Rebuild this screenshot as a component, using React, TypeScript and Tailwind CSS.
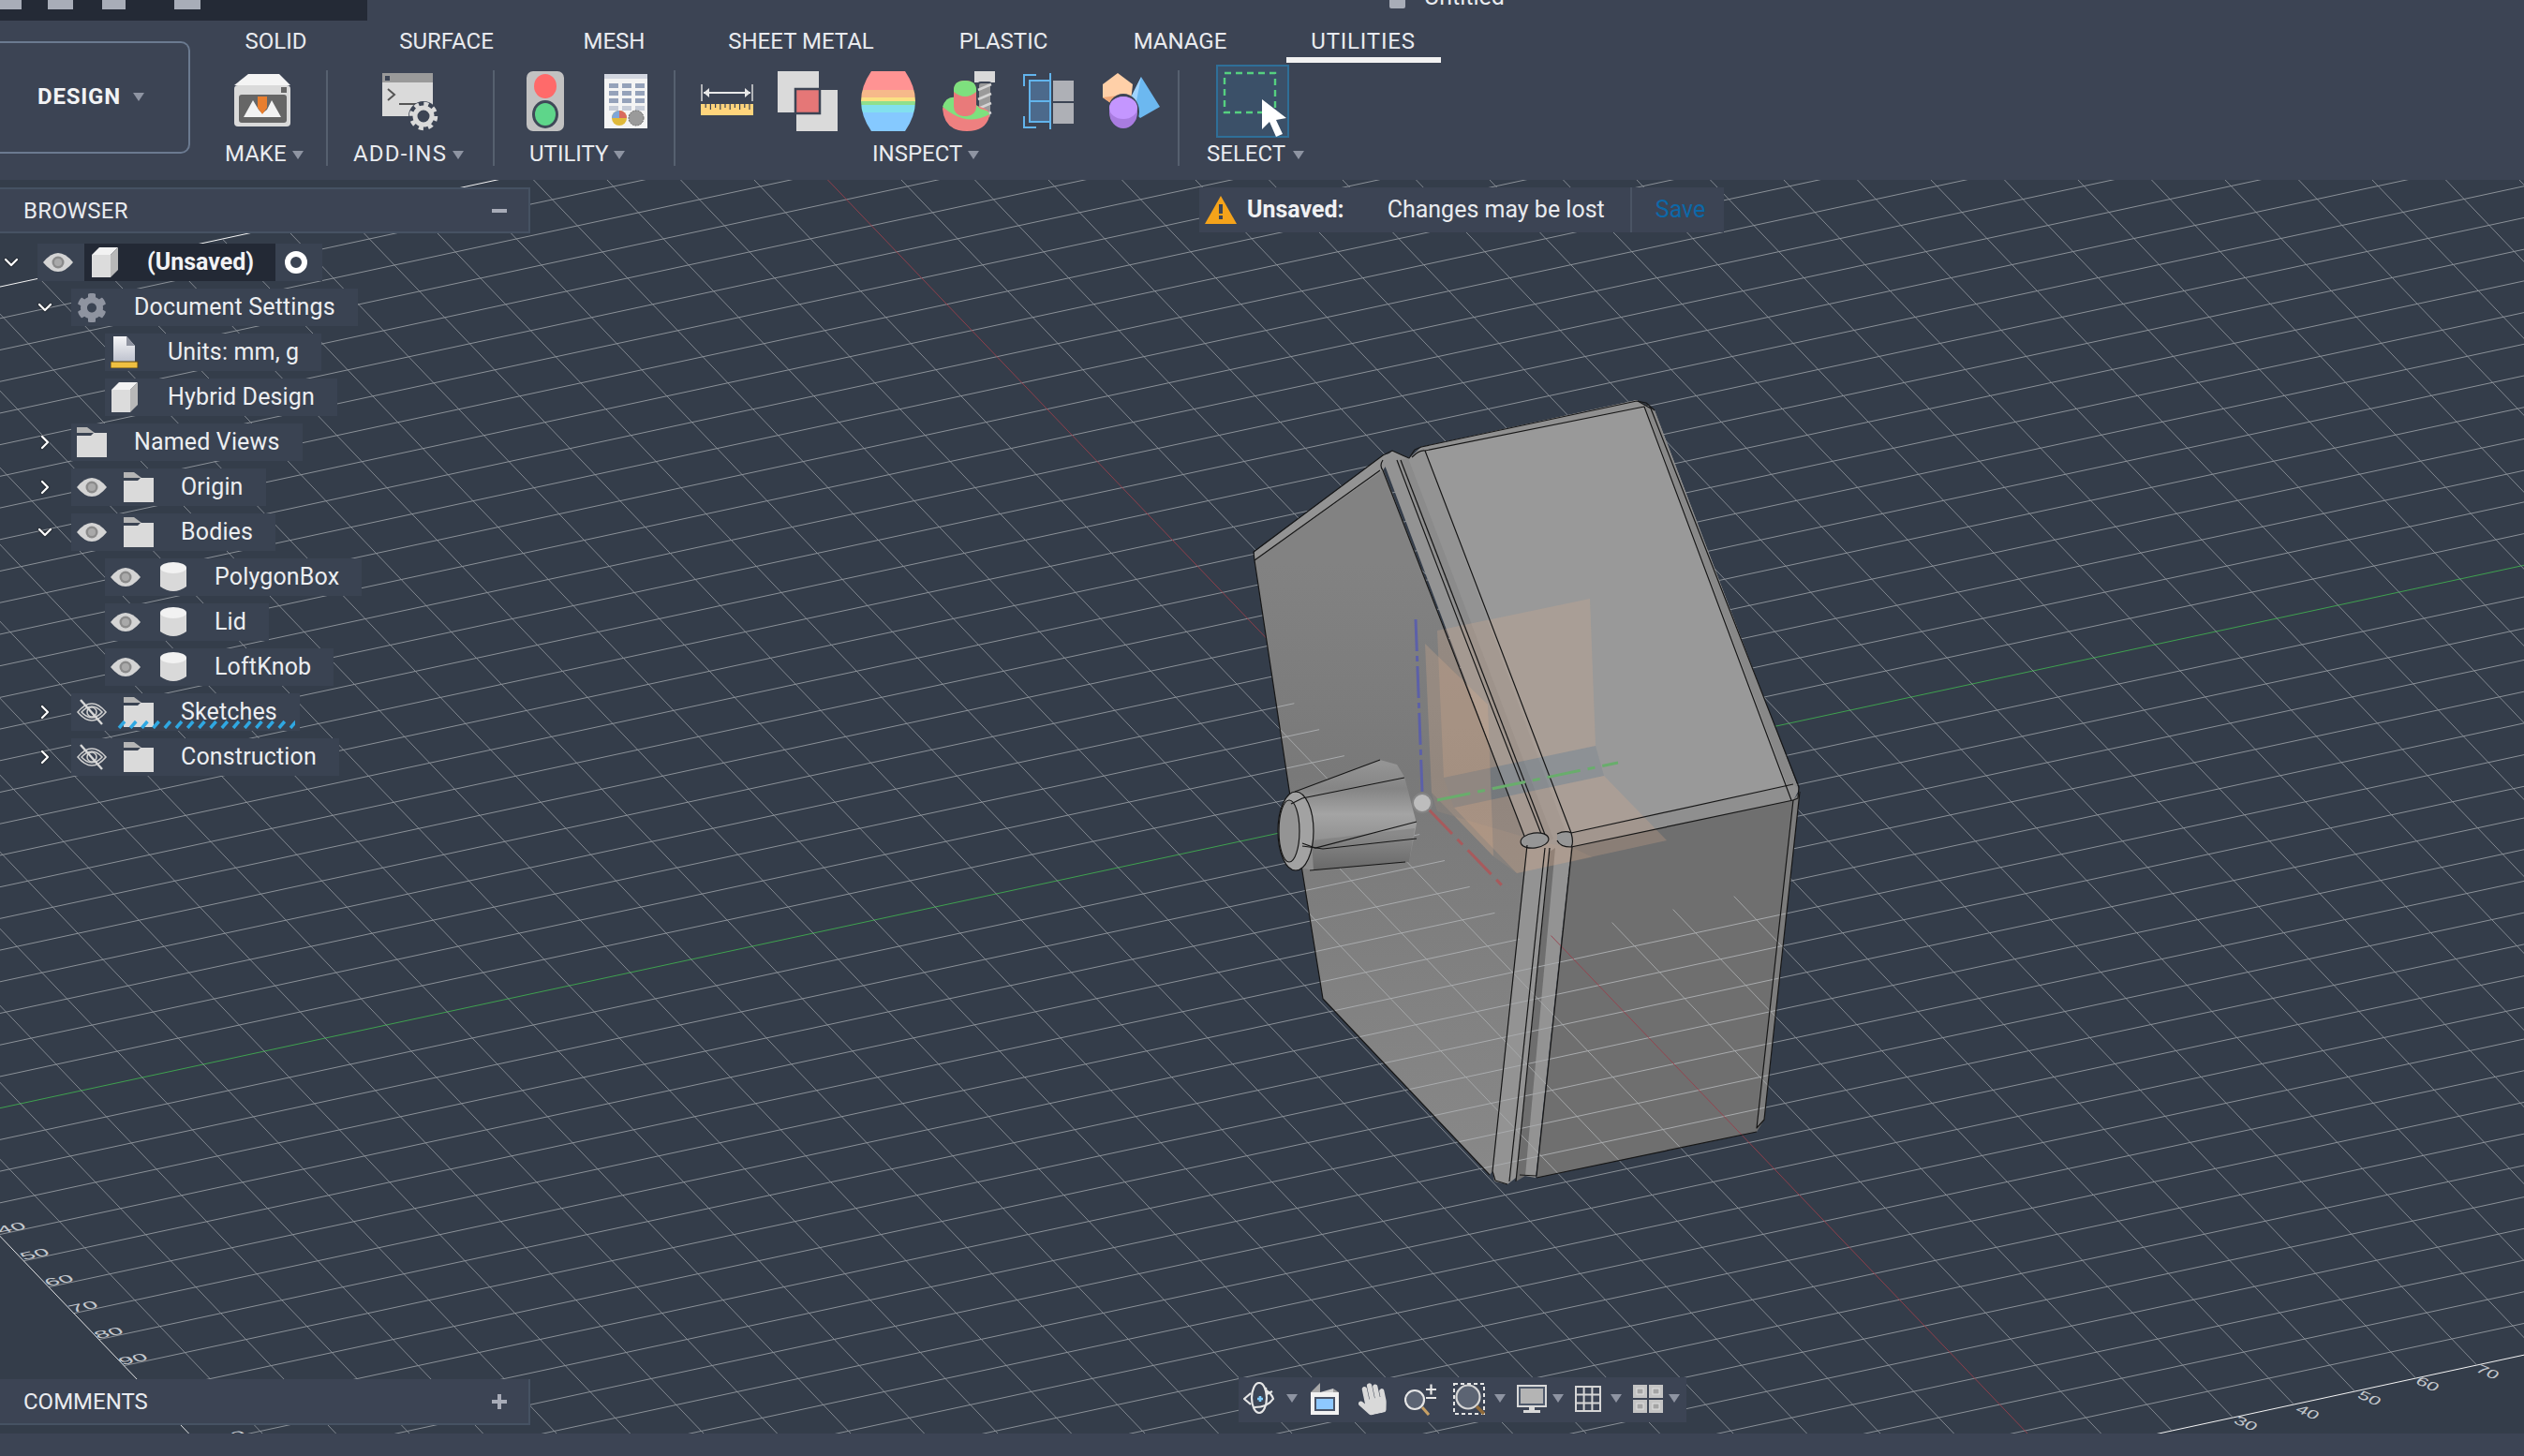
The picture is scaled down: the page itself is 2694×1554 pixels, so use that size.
import { ChevronDown, ChevronRight } from "lucide-react";
import { FaCog, FaHandPaper } from "react-icons/fa";
import type { ReactNode } from "react";

// ground grid is a plain affine projection, fitted from the screenshot
const O = { x: 1519, y: 856 };
const U = { x: 65.1, y: -14 };
const V = { x: 26.76, y: 27.96 };
const pt = (a: number, b: number) => ({ x: O.x + a * U.x + b * V.x, y: O.y + a * U.y + b * V.y });
const range = (from: number, to: number) => Array.from({ length: to - from + 1 }, (_, i) => from + i);

const A_MIN = -25;
const A_MAX = 25;
const B_MIN = -26;
const B_MAX = 25;

function Seg({ a0, b0, a1, b1, color, width = 1 }: { a0: number; b0: number; a1: number; b1: number; color: string; width?: number }) {
  const p = pt(a0, b0);
  const q = pt(a1, b1);
  return <line x1={p.x} y1={p.y} x2={q.x} y2={q.y} stroke={color} strokeWidth={width} />;
}

const MINOR = "#8b9198";

function lineColor(kind: "a" | "b", i: number) {
  if (kind === "a" && i === 0) return "#99404c";
  if (kind === "b" && i === 0) return "#3fa14f";
  if (kind === "a" && i === A_MIN) return "#f4f4f4";
  if (kind === "b" && (i === B_MIN || i === B_MAX)) return "#f4f4f4";
  return MINOR;
}

function GridLines() {
  return (
    <g>
      {range(B_MIN, B_MAX).map((b) => (
        <Seg key={"h" + b} a0={A_MIN} b0={b} a1={A_MAX} b1={b} color={lineColor("b", b)} />
      ))}
      {range(A_MIN, A_MAX).map((a) => (
        <Seg key={"v" + a} a0={a} b0={B_MIN} a1={a} b1={B_MAX} color={lineColor("a", a)} width={0.9} />
      ))}
    </g>
  );
}

// the part of the grid that stays visible through the lower half of the model
function GridOverBody() {
  return (
    <g clipPath="url(#bodyClip)">
      {range(-12, B_MAX).map((b) => (
        <Seg key={"h" + b} a0={A_MIN} b0={b} a1={b <= 5 ? -0.47 : A_MAX} b1={b} color={lineColor("b", b) === MINOR ? "#a9abad" : lineColor("b", b)} />
      ))}
      {range(A_MIN, A_MAX).map((a) => (
        <Seg key={"v" + a} a0={a} b0={a < 0 ? B_MIN : 5.1} a1={a} b1={B_MAX} color={lineColor("a", a) === MINOR ? "#a9abad" : lineColor("a", a)} width={0.9} />
      ))}
    </g>
  );
}

function Labels() {
  const left = [
    ["40", 15, 1310],
    ["50", 40, 1338],
    ["60", 66, 1366],
    ["70", 92, 1394],
    ["80", 119, 1422],
    ["90", 145, 1450],
    ["100", 186, 1479],
    ["120", 243, 1534],
  ] as const;
  const bottom = [
    ["30", 2392, 1520],
    ["40", 2458, 1508],
    ["50", 2524, 1493],
    ["60", 2586, 1478],
    ["70", 2650, 1465],
  ] as const;
  return (
    <g fontFamily="'Liberation Sans', sans-serif" fontSize="20" fill="#c4c8cd">
      {left.map(([t, x, y]) => (
        <text key={"l" + t} textAnchor="middle" transform={`matrix(1.3 -0.28 0.45 0.5 ${x} ${y + 4})`}>
          {t}
        </text>
      ))}
      {bottom.map(([t, x, y]) => (
        <text key={"b" + t} textAnchor="middle" transform={`matrix(1 0.42 -0.45 0.55 ${x + 2} ${y + 3})`}>
          {t}
        </text>
      ))}
    </g>
  );
}

const BODY_OUTLINE =
  "1339,589 1476,486 1486,481 1504,489 1517,477 1747,427 1766,438 1920,843 1921,850 1883,1195 1875,1208 1640,1257 1622,1254 1609,1264 1595,1261 1590,1254 1412,1066 1390,930 1376,843 1339,598";

function Model() {
  return (
    <g>
      <polygon points="1339,598 1476,500 1630,900 1593,1250 1590,1254 1412,1066 1390,930 1376,843" fill="url(#leftFace)" />
      <polygon points="1339,589 1476,486 1490,482 1476,502 1339,598" fill="#939393" />
      <polygon points="1476,491 1486,481 1504,489 1517,477 1521,481 1677,889 1677,904 1639,1257 1622,1254 1609,1264 1595,1261 1593,1250 1630,902" fill="#939393" />
      <polygon points="1493,491 1503,489 1658,895 1650,900" fill="#858585" opacity="0.6" />
      <polygon points="1654,909 1660,905 1628,1255 1618,1261" fill="#6e6e6e" />
      <polygon points="1517,477 1747,427 1766,438 1920,843 1914,854 1677,904 1521,481" fill="#999999" />
      <polygon points="1756,434 1766,438 1920,843 1912,850" fill="#888888" />
      <polygon points="1521,481 1517,477 1747,427 1756,434" fill="#909090" />
      <polygon points="1677,889 1914,837 1920,843 1914,854 1677,904" fill="#8f8f8f" />
      <polygon points="1677,904 1914,854 1921,845 1883,1195 1875,1208 1640,1257" fill="#6f6f6f" />
      <polygon points="1914,854 1921,845 1883,1195 1875,1204" fill="#7c7c7c" />

      {/* origin planes */}
      <polygon points="1541,830 1703,796 1712,828 1552,862" fill="#66788a" opacity="0.22" />
      <polygon points="1534,673 1697,639 1703,796 1541,830" fill="#e2b08e" opacity="0.22" />
      <polygon points="1521,687 1588,752 1594,914 1528,846" fill="#e2b08e" opacity="0.26" />
      <polygon points="1552,862 1712,828 1779,897 1619,932" fill="#e2b08e" opacity="0.24" />
      <polygon points="1528,846 1594,914 1619,932 1700,915 1677,904 1650,900 1534,866" fill="#e2b08e" opacity="0.1" />

      <GridOverBody />

      {/* edges */}
      <g fill="none" stroke="#161616" strokeWidth="1.2" strokeLinejoin="round">
        <polyline points="1339,598 1338,589 1476,486 1486,481 1497,486 1504,489 1510,480 1517,477 1747,428 1757,430 1766,438" />
        <polyline points="1339,598 1376,843 1390,930 1412,1066 1590,1254" />
        <polyline points="1339,598 1473,502" />
        <path d="M1476,491 Q1472,497 1476,502 Q1560,720 1630,900" />
        <path d="M1491,491 Q1570,700 1647,895" />
        <path d="M1495,491 Q1575,700 1651,896" />
        <path d="M1507,488 Q1515,480 1521,481 Q1600,690 1677,889" />
        <polyline points="1521,481 1755,434 1912,854" />
        <polyline points="1748,428 1762,436 1920,840 1919,852 1914,854" />
        <polyline points="1677,889 1914,837" />
        <polyline points="1677,904 1914,854" />
        <ellipse cx="1638" cy="897" rx="15" ry="8" transform="rotate(-8 1638 897)" fill="#969696" />
        <path d="M1662,890 Q1671,886 1677,889 Q1680,900 1677,904 Q1665,904 1662,897" fill="#969696" />
        <polyline points="1630,902 1593,1250 1596,1260 1609,1264" />
        <polyline points="1649,905 1611,1261" />
        <polyline points="1654,905 1618,1261" />
        <polyline points="1678,904 1640,1255 1622,1254" />
        <polyline points="1914,854 1875,1204 1883,1195 1921,845" />
        <polyline points="1640,1257 1875,1208" />
      </g>

      {/* axes */}
      <line x1="1511" y1="661" x2="1518" y2="845" stroke="#5c60a8" strokeWidth="3" strokeDasharray="34 5 6 5" />
      <line x1="1534" y1="854" x2="1727" y2="814" stroke="#69ad6c" strokeWidth="3" strokeDasharray="36 8 8 8" />
      <line x1="1525" y1="864" x2="1604" y2="946" stroke="#a85a5c" strokeWidth="3" strokeDasharray="36 8 8 8" />
      <circle cx="1518" cy="857" r="10" fill="#bdbdbd" stroke="#858585" strokeWidth="2" />

      {/* knob */}
      <polygon points="1382,845 1473,811 1491,816 1499,829 1512,879 1504,920 1402,929 1384,925" fill="url(#knob)" />
      <polygon points="1400,897 1510,884 1504,920 1402,929" fill="url(#knobLow)" />
      <ellipse cx="1383" cy="887" rx="19" ry="42" fill="#a2a2a2" />
      <ellipse cx="1376" cy="887" rx="11" ry="33" fill="#949494" />
      <g fill="none" stroke="#161616" strokeWidth="1.2">
        <ellipse cx="1383" cy="887" rx="19" ry="42" />
        <ellipse cx="1376" cy="887" rx="11" ry="33" />
        <polyline points="1382,845 1473,811" />
        <polyline points="1378,858 1390,852 1499,830" />
        <polyline points="1390,900 1404,905 1512,877" />
        <polyline points="1390,903 1412,906 1512,895" />
        <polyline points="1398,929 1500,920" />
      </g>
    </g>
  );
}

function Viewport() {
  return (
    <svg className="absolute left-0 top-0" width="2694" height="1338" viewBox="0 192 2694 1338">
      <defs>
        <linearGradient id="leftFace" x1="0" y1="600" x2="0" y2="1250" gradientUnits="userSpaceOnUse">
          <stop offset="0" stopColor="#828282" />
          <stop offset="0.35" stopColor="#797979" />
          <stop offset="1" stopColor="#888888" />
        </linearGradient>
        <linearGradient id="knob" x1="0" y1="815" x2="0" y2="905" gradientUnits="userSpaceOnUse">
          <stop offset="0" stopColor="#949494" />
          <stop offset="0.3" stopColor="#858585" />
          <stop offset="0.6" stopColor="#a4a4a4" />
          <stop offset="1" stopColor="#8c8c8c" />
        </linearGradient>
        <linearGradient id="knobLow" x1="0" y1="890" x2="0" y2="929" gradientUnits="userSpaceOnUse">
          <stop offset="0" stopColor="#8a8a8a" />
          <stop offset="1" stopColor="#686868" />
        </linearGradient>
        <clipPath id="bodyClip">
          <polygon points={BODY_OUTLINE} />
        </clipPath>
      </defs>
      <GridLines />
      <Labels />
      <Model />
    </svg>
  );
}

function Tri({ className = "" }: { className?: string }) {
  return (
    <svg width="12" height="9" viewBox="0 0 12 9" className={className}>
      <polygon points="0,0 12,0 6,9" fill="#8e94a2" />
    </svg>
  );
}

function Eye() {
  return (
    <svg width="32" height="22" viewBox="0 0 32 22">
      <path d="M0 11 Q16 -9 32 11 Q16 31 0 11Z" fill="#d4d4d4" />
      <circle cx="16" cy="11" r="6.5" fill="#8b8b8b" />
      <circle cx="16" cy="11" r="4" fill="#a9a9a9" />
    </svg>
  );
}

function EyeOff() {
  return (
    <svg width="32" height="28" viewBox="0 0 32 28" fill="none" stroke="#cfcfcf" strokeWidth="1.6">
      <path d="M1 14 Q16 -4 31 14 Q16 32 1 14Z" />
      <path d="M5 14 Q16 2 27 14 Q16 26 5 14Z" />
      <circle cx="16" cy="14" r="5" />
      <line x1="4" y1="1" x2="27" y2="27" strokeWidth="2.4" stroke="#d8d8d8" />
    </svg>
  );
}

function Cube() {
  return (
    <svg width="28" height="32" viewBox="0 0 28 32">
      <polygon points="0,8 8,0 28,0 20,8" fill="#f2f2f2" />
      <polygon points="0,8 20,8 20,32 0,32" fill="#dcdcdc" />
      <polygon points="20,8 28,0 28,24 20,32" fill="#b8b8b8" />
    </svg>
  );
}

function Folder() {
  return (
    <svg width="32" height="32" viewBox="0 0 32 32">
      <polygon points="0,0 11,0 19,6 0,6" fill="#b5b5b5" />
      <polygon points="0,6 0,32 32,32 32,6 18,6 14,10 0,10" fill="#dadada" />
      <rect x="0" y="9" width="32" height="23" fill="#dadada" />
    </svg>
  );
}

function Cylinder() {
  return (
    <svg width="28" height="32" viewBox="0 0 28 32">
      <path d="M0 6 V26 Q14 36 28 26 V6 Z" fill="#d9d9d9" />
      <ellipse cx="14" cy="6" rx="14" ry="6" fill="#f2f2f2" />
    </svg>
  );
}

function UnitsDoc() {
  return (
    <svg width="30" height="34" viewBox="0 0 30 34">
      <defs>
        <linearGradient id="docFill" x1="0" y1="0" x2="0" y2="1">
          <stop offset="0" stopColor="#f6f6f8" />
          <stop offset="1" stopColor="#bcc0cc" />
        </linearGradient>
      </defs>
      <polygon points="3,0 17,0 26,10 26,28 3,28" fill="url(#docFill)" />
      <polygon points="17,0 26,10 17,10" fill="#8f93a0" />
      <rect x="0" y="27" width="29" height="7" fill="#f0c040" stroke="#5a4512" strokeWidth="1" />
    </svg>
  );
}

type Row = {
  level: 1 | 2;
  label: string;
  chevron?: "down" | "right";
  eye?: "on" | "off";
  icon: ReactNode;
  wavy?: boolean;
};

const ROWS: Row[] = [
  { level: 1, label: "Document Settings", chevron: "down", icon: <FaCog size={33} color="#8f94a0" /> },
  { level: 2, label: "Units: mm, g", icon: <UnitsDoc /> },
  { level: 2, label: "Hybrid Design", icon: <Cube /> },
  { level: 1, label: "Named Views", chevron: "right", icon: <Folder /> },
  { level: 1, label: "Origin", chevron: "right", eye: "on", icon: <Folder /> },
  { level: 1, label: "Bodies", chevron: "down", eye: "on", icon: <Folder /> },
  { level: 2, label: "PolygonBox", eye: "on", icon: <Cylinder /> },
  { level: 2, label: "Lid", eye: "on", icon: <Cylinder /> },
  { level: 2, label: "LoftKnob", eye: "on", icon: <Cylinder /> },
  { level: 1, label: "Sketches", chevron: "right", eye: "off", icon: <Folder />, wavy: true },
  { level: 1, label: "Construction", chevron: "right", eye: "off", icon: <Folder /> },
];

function Chevron({ dir }: { dir?: "down" | "right" }) {
  if (!dir) return <span className="w-[24px]" />;
  const Icon = dir === "down" ? ChevronDown : ChevronRight;
  return <Icon size={24} strokeWidth={2.2} className="text-white drop-shadow-[0_0_1px_#111]" />;
}

function TreeRow({ row }: { row: Row }) {
  return (
    <div className={row.level === 1 ? "flex h-[40px] items-center pl-[36px]" : "flex h-[40px] items-center pl-[112px]"}>
      {row.level === 1 && (
        <span className="flex w-[40px] justify-start">
          <Chevron dir={row.chevron} />
        </span>
      )}
      <div className="relative flex h-[40px] items-center bg-[#3a4352] pl-[6px] pr-[24px]">
        {row.eye && (
          <span className={row.level === 1 ? "mr-[18px] flex w-[32px] justify-center" : "mr-[20px] flex w-[32px] justify-center"}>
            {row.eye === "on" ? <Eye /> : <EyeOff />}
          </span>
        )}
        <span className={row.level === 1 ? "flex w-[32px] justify-center" : "flex w-[30px] justify-center"}>{row.icon}</span>
        <span className={`text-[25px] tracking-[0.15px] text-[#eceef1] ${row.level === 1 ? "ml-[29px]" : row.eye ? "ml-[29px]" : "ml-[31px]"}`}>{row.label}</span>
        {row.wavy && (
          <svg className="absolute bottom-[2px] left-[49px]" width="190" height="10" viewBox="0 0 190 10">
            {range(0, 15).map((i) => (
              <line key={i} x1={i * 12.2 + 2} y1="9" x2={i * 12.2 + 8} y2="2" stroke="#2fa8e2" strokeWidth="3.5" />
            ))}
          </svg>
        )}
      </div>
    </div>
  );
}

function BrowserPanel() {
  return (
    <div className="absolute left-0 top-[8px] flex w-[566px] flex-col text-[#e9ebef]">
      <div className="flex h-[49px] items-center justify-between border-y-2 border-r-2 border-[#465263] bg-[#3c4454] pl-[25px] pr-[23px] text-[24px]">
        <span className="tracking-[0.2px]">BROWSER</span>
        <span className="h-[4px] w-[16px] bg-[#a8acb8]" />
      </div>
      <div className="mt-[11px] flex flex-col gap-[8px]">
        <div className="flex h-[40px] items-center">
          <span className="flex w-[40px]">
            <Chevron dir="down" />
          </span>
          <div className="flex h-[40px] w-[50px] items-center justify-start bg-[#3a4352] pl-[6px]">
            <Eye />
          </div>
          <div className="flex h-[40px] w-[204px] items-center bg-[#232935] pl-[8px]">
            <Cube />
            <span className="ml-[31px] text-[25px] font-bold text-[#f2f3f5]">(Unsaved)</span>
          </div>
          <div className="flex h-[40px] w-[50px] items-center justify-start bg-[#3a4352] pl-[10px]">
            <span className="h-[24px] w-[24px] rounded-full border-[6px] border-white" />
          </div>
        </div>
        {ROWS.map((row) => (
          <TreeRow key={row.label} row={row} />
        ))}
      </div>
    </div>
  );
}

function CommentsPanel() {
  return (
    <div className="absolute bottom-[9px] left-0 flex h-[49px] w-[566px] items-center justify-between border-b-2 border-r-2 border-[#465263] bg-[#3c4454] pl-[25px] pr-[23px] text-[24px] text-[#e9ebef]">
      <span>COMMENTS</span>
      <span className="relative h-[16px] w-[16px]">
        <span className="absolute left-0 top-[6px] h-[4px] w-[16px] bg-[#a8acb8]" />
        <span className="absolute left-[6px] top-0 h-[16px] w-[4px] bg-[#a8acb8]" />
      </span>
    </div>
  );
}

function UnsavedBanner() {
  return (
    <div className="absolute left-[1280px] top-[8px] flex h-[48px] w-[560px] items-center bg-[#3c4454] text-[25px]">
      <svg className="ml-[6px]" width="34" height="30" viewBox="0 0 34 30">
        <polygon points="17,0 34,30 0,30" fill="#f5a31a" />
        <rect x="15" y="9" width="4" height="10" fill="#3c4454" />
        <rect x="15" y="21" width="4" height="4" fill="#3c4454" />
      </svg>
      <span className="ml-[11px] font-bold text-[#f0f1f3]">Unsaved:</span>
      <span className="ml-[46px] text-[#e9ebef]">Changes may be lost</span>
      <span className="ml-[27px] h-[48px] w-[2px] bg-[#4a5464]" />
      <span className="ml-[25px] text-[#0c68a8]">Save</span>
    </div>
  );
}

function NavBar() {
  return (
    <div className="absolute left-[1322px] top-[1278px] flex h-[48px] w-[478px] items-center bg-[#3c4454] pb-[3px] pl-[5px]">
      <svg width="34" height="36" viewBox="0 0 34 36" fill="none" stroke="#e6e6e6" strokeWidth="2.2">
        <path d="M8 12 L1 18 L8 24" />
        <ellipse cx="17" cy="17" rx="8" ry="16" />
        <path d="M12 27 Q26 27 32 18 Q30 12 24 9" />
        <path d="M24 6 L25 13 L31 10" />
        <path d="M15 18 h6 M18 15 v6" stroke="#7ecbff" strokeWidth="2.6" />
      </svg>
      <Tri className="ml-[12px]" />
      <svg className="ml-[14px]" width="30" height="34" viewBox="0 0 30 34">
        <polygon points="0,10 10,0 10,10" fill="#a8a8a8" />
        <polygon points="10,10 24,6 24,10" fill="#d0d0d0" />
        <polygon points="24,6 30,10 24,10" fill="#a0a0a0" />
        <rect x="0" y="10" width="30" height="24" fill="#f2f2f2" />
        <rect x="5" y="16" width="20" height="13" fill="#8ec8ff" stroke="#4a5468" strokeWidth="2" />
      </svg>
      <FaHandPaper size={34} color="#d9d9d9" className="ml-[18px] -rotate-12" />
      <svg className="ml-[18px]" width="34" height="36" viewBox="0 0 34 36" fill="none">
        <circle cx="11" cy="19" r="10" fill="#5c6473" stroke="#e6e6e6" strokeWidth="2.2" />
        <line x1="19" y1="27" x2="26" y2="35" stroke="#c8a064" strokeWidth="3" />
        <path d="M23 8 h11 M28.5 2.5 v11 M23 17 h11" stroke="#e6e6e6" strokeWidth="2.2" />
      </svg>
      <svg className="ml-[18px]" width="34" height="34" viewBox="0 0 34 34" fill="none">
        <rect x="1" y="1" width="32" height="32" stroke="#e6e6e6" strokeWidth="2" strokeDasharray="4 3" />
        <circle cx="16" cy="15" r="12.5" fill="#5c6473" stroke="#d6d6d6" strokeWidth="2.2" />
        <line x1="25" y1="25" x2="33" y2="33" stroke="#8f6a3a" strokeWidth="3.5" />
      </svg>
      <Tri className="ml-[10px]" />
      <svg className="ml-[12px]" width="32" height="30" viewBox="0 0 32 30">
        <rect x="0" y="0" width="32" height="24" fill="#d9d9d9" />
        <rect x="2" y="2" width="28" height="20" fill="#4f5a6c" />
        <rect x="4" y="4" width="24" height="16" fill="#b4b4b4" />
        <rect x="13" y="24" width="6" height="3" fill="#d9d9d9" />
        <rect x="7" y="27" width="18" height="3" fill="#d9d9d9" />
      </svg>
      <Tri className="ml-[6px]" />
      <svg className="ml-[12px]" width="28" height="28" viewBox="0 0 28 28" fill="none" stroke="#d6d6d6" strokeWidth="2">
        <rect x="1" y="1" width="26" height="26" />
        <path d="M9.6 1 V27 M18.4 1 V27 M1 9.6 H27 M1 18.4 H27" />
      </svg>
      <Tri className="ml-[10px]" />
      <svg className="ml-[12px]" width="32" height="30" viewBox="0 0 32 30">
        {[
          [0, 0],
          [17, 0],
          [0, 16],
          [17, 16],
        ].map(([x, y]) => (
          <g key={`${x}-${y}`}>
            <rect x={x} y={y} width="15" height="14" fill="#c4c4c4" />
            <rect x={x + 4} y={y + 4} width="7" height="6" fill="#a4a4a4" stroke="#e0e0e0" strokeWidth="1" />
          </g>
        ))}
      </svg>
      <Tri className="ml-[6px]" />
    </div>
  );
}

function MakeIcon() {
  return (
    <svg width="60" height="56" viewBox="0 0 60 56">
      <polygon points="15,0 48,0 60,12 0,12" fill="#f4f4f4" />
      <rect x="0" y="12" width="60" height="44" rx="4" fill="#dadada" />
      <rect x="5" y="22" width="51" height="30" rx="3" fill="#666666" />
      <polygon points="10,46 20,28 26,38 30,42 35,38 40,28 50,46" fill="#f2f2f2" />
      <polygon points="25,24 35,24 35,36 30,43 25,36" fill="#e97e2e" />
      <rect x="50" y="14" width="6" height="6" fill="#666666" />
    </svg>
  );
}

function AddInsIcon() {
  return (
    <svg width="60" height="62" viewBox="0 0 60 62">
      <rect x="0" y="0" width="54" height="46" fill="#dadada" />
      <rect x="0" y="0" width="54" height="10" fill="#9a9a9a" />
      <rect x="3" y="3" width="5" height="5" fill="#3c4454" />
      <path d="M6 17 L13 23 L6 29" fill="none" stroke="#555" strokeWidth="2" />
      <line x1="18" y1="33" x2="37" y2="33" stroke="#555" strokeWidth="2" />
      <circle cx="44" cy="46" r="16" fill="#3c4454" />
      <circle cx="44" cy="46" r="9" fill="none" stroke="#dadada" strokeWidth="5" />
      <circle cx="44" cy="46" r="13" fill="none" stroke="#dadada" strokeWidth="4.5" strokeDasharray="5 5.2" />
    </svg>
  );
}

function TrafficIcon() {
  return (
    <svg width="40" height="64" viewBox="0 0 40 64">
      <rect x="0" y="0" width="40" height="64" rx="7" fill="#c2c2c2" />
      <ellipse cx="20" cy="16" rx="12" ry="13" fill="#ff6a6a" />
      <ellipse cx="20" cy="46" rx="14" ry="15" fill="#3f4958" />
      <ellipse cx="20" cy="46" rx="11" ry="12" fill="#5ed68a" />
    </svg>
  );
}

function TableIcon() {
  const cells = range(0, 3).flatMap((r) => range(0, 2).map((c) => [r, c]));
  return (
    <svg width="46" height="58" viewBox="0 0 46 58">
      <rect width="46" height="58" fill="#f4f4f4" />
      <rect width="46" height="5" fill="#d2d6e0" />
      {cells.map(([r, c]) => (
        <rect key={`${r}-${c}`} x={5 + c * 14} y={10 + r * 8} width="10" height="5" fill={r === 3 ? "#c6ccd8" : "#95a2ba"} />
      ))}
      <circle cx="16" cy="47" r="8" fill="#e0b93a" />
      <path d="M16 47 L16 39 A8 8 0 0 1 24 47 Z" fill="#d96a5e" />
      <path d="M16 47 L8 47 A8 8 0 0 1 16 39 Z" fill="#7fa6d8" />
      <circle cx="34" cy="47" r="8" fill="#9a9a9a" stroke="#666" strokeDasharray="2 1" />
    </svg>
  );
}

function RulerIcon() {
  return (
    <svg width="56" height="34" viewBox="0 0 56 34">
      <path d="M1 0 V18 M55 0 V18" stroke="#d9d9d9" strokeWidth="1.5" />
      <path d="M3 9 H53" stroke="#e8e8e8" strokeWidth="2" />
      <path d="M9 4 L3 9 L9 14 Z M47 4 L53 9 L47 14 Z" fill="#e8e8e8" />
      <rect x="0" y="21" width="56" height="12" fill="#ffd47c" />
      {range(1, 10).map((i) => (
        <line key={i} x1={i * 5.2} y1="21" x2={i * 5.2} y2={i % 2 ? 25 : 27} stroke="#3c4454" strokeWidth="1.2" />
      ))}
    </svg>
  );
}

function InterferenceIcon() {
  return (
    <svg width="64" height="64" viewBox="0 0 64 64">
      <rect x="0" y="0" width="44" height="44" fill="#dadada" />
      <rect x="20" y="20" width="44" height="44" fill="#dadada" />
      <rect x="19" y="19" width="26" height="26" fill="#e57777" stroke="#3c4454" strokeWidth="2.5" />
    </svg>
  );
}

function ZebraIcon() {
  return (
    <svg width="64" height="64" viewBox="0 0 64 64">
      <defs>
        <clipPath id="barrel">
          <path d="M14 0 H50 Q72 32 50 64 H14 Q-8 32 14 0Z" />
        </clipPath>
      </defs>
      <g clipPath="url(#barrel)">
        <rect y="0" width="64" height="20" fill="#ff9393" />
        <rect y="20" width="64" height="8" fill="#f6b98a" />
        <rect y="28" width="64" height="4" fill="#fbe083" />
        <rect y="32" width="64" height="4" fill="#90e08c" />
        <rect y="36" width="64" height="8" fill="#82e0ee" />
        <rect y="44" width="64" height="20" fill="#85c9ff" />
      </g>
    </svg>
  );
}

function DrillIcon() {
  return (
    <svg width="56" height="64" viewBox="0 0 56 64">
      <rect x="34" y="0" width="22" height="12" fill="#d9d9d9" />
      <rect x="38" y="12" width="14" height="38" rx="3" fill="#9a9a9a" stroke="#3c4454" strokeWidth="2" />
      <path d="M38 20 L52 14 M38 30 L52 24 M38 40 L52 34 M38 50 L52 44" stroke="#d4d4d4" strokeWidth="2.5" />
      <path d="M0 40 Q4 28 12 28 L40 38 Q50 40 50 48 Q46 64 26 64 Q2 64 0 40Z" fill="#ee8080" />
      <path d="M0 38 Q4 26 14 28 L30 30 L40 40 Q50 42 50 46 Q26 60 0 38Z" fill="#7ee07e" />
      <rect x="12" y="10" width="24" height="38" rx="10" fill="#e97a7a" />
      <path d="M12 22 V20 Q12 10 24 10 Q36 10 36 20 V22 Q24 32 12 22Z" fill="#7ee07e" />
    </svg>
  );
}

function SectionIcon() {
  return (
    <svg width="56" height="60" viewBox="0 0 56 60">
      <path d="M14 2 H1 V14 M1 46 V58 H14" fill="none" stroke="#62b4ec" strokeWidth="2" />
      <rect x="7" y="8" width="22" height="22" fill="#4c6a8c" stroke="#62b4ec" strokeWidth="2" />
      <rect x="7" y="30" width="22" height="22" fill="#4c6a8c" stroke="#62b4ec" strokeWidth="2" />
      <line x1="29" y1="0" x2="29" y2="60" stroke="#62b4ec" strokeWidth="2" />
      <rect x="32" y="8" width="22" height="22" fill="#aeb0b6" />
      <rect x="32" y="32" width="22" height="22" fill="#aeb0b6" />
    </svg>
  );
}

function ShapesIcon() {
  return (
    <svg width="62" height="60" viewBox="0 0 62 60">
      <polygon points="16,0 32,12 30,30 14,36 0,26 0,12" fill="#ffd0a8" />
      <polygon points="0,26 14,36 30,30 16,24" fill="#f0a878" />
      <polygon points="41,4 61,36 40,48 26,34" fill="#6cb8f0" />
      <polygon points="41,4 26,34 34,40" fill="#a0d4ff" />
      <ellipse cx="22" cy="41" rx="17" ry="19" fill="#3c4454" />
      <ellipse cx="22" cy="42" rx="15" ry="17" fill="#a97ce0" />
      <ellipse cx="22" cy="37" rx="15" ry="12" fill="#c496ff" />
    </svg>
  );
}

function SelectIcon() {
  return (
    <div className="relative h-[78px] w-[78px] border-2 border-[#2f6f98] bg-[#3b5068]">
      <svg className="absolute left-[5px] top-[5px]" width="72" height="70" viewBox="0 0 72 70">
        <rect x="2" y="2" width="54" height="42" fill="none" stroke="#55d080" strokeWidth="2.4" strokeDasharray="7 5" />
        <polygon points="42,30 42,62 50,54 57,70 64,67 57,52 68,50" fill="#ffffff" />
      </svg>
    </div>
  );
}

function Group({ width, iconPad, labelPad, label, children }: { width: string; iconPad: string; labelPad: string; label: string; children: ReactNode }) {
  return (
    <div className={`flex h-[102px] flex-col ${width}`}>
      <div className={`flex h-[70px] items-start pt-[1px] ${iconPad}`}>{children}</div>
      <div className={`flex h-[32px] items-center gap-[6px] pt-[6px] text-[24px] text-[#e9ebef] ${labelPad}`}>
        <span>{label}</span>
        <Tri className="mt-[2px]" />
      </div>
    </div>
  );
}

const Sep = () => <div className="h-[102px] w-[2px] bg-[#56606f]" />;

const TABS = [
  { label: "SOLID", width: "w-[181px]" },
  { label: "SURFACE", width: "w-[183px]" },
  { label: "MESH", width: "w-[175px]" },
  { label: "SHEET METAL", width: "w-[224px]" },
  { label: "PLASTIC", width: "w-[208px]" },
  { label: "MANAGE", width: "w-[169px]" },
  { label: "UTILITIES", width: "w-[222px]", active: true },
];

function Toolbar() {
  return (
    <div className="h-[192px] bg-[#3c4454] text-[#e9ebef]">
      <div className="flex h-[22px] overflow-hidden">
        <div className="relative h-[22px] w-[392px] bg-[#242a36]">
          <span className="absolute left-0 top-0 h-[10px] w-[23px] bg-[#a8adb8]" />
          <span className="absolute left-[51px] top-0 h-[10px] w-[27px] bg-[#a8adb8]" />
          <span className="absolute left-[109px] top-0 h-[10px] w-[25px] bg-[#a8adb8]" />
          <span className="absolute left-[186px] top-0 h-[10px] w-[28px] bg-[#a8adb8]" />
        </div>
        <span className="ml-[1091px] h-[9px] w-[17px] rounded-b-[2px] bg-[#a8adb8]" />
        <span className="ml-[20px] -mt-[21px] text-[25px] leading-[36px] text-[#e9ebef]">Untitled</span>
      </div>
      <div className="flex">
        <div className="w-[204px] pt-[22px]">
          <div className="flex h-[120px] w-[203px] items-center gap-[13px] rounded-r-[10px] border-2 border-l-0 border-[#6b7a90] pb-[2px] pl-[40px]">
            <span className="text-[24px] font-bold tracking-[0.8px] text-[#f2f3f5]">DESIGN</span>
            <Tri />
          </div>
        </div>
        <div className="flex flex-col">
          <div className="flex h-[46px]">
            {TABS.map((tab) => (
              <div key={tab.label} className={`flex flex-col items-center ${tab.width}`}>
                <span className={tab.active ? "flex h-[39px] items-center pt-[4px] text-[24px] tracking-[0.8px]" : "flex h-[39px] items-center pt-[4px] text-[24px]"}>{tab.label}</span>
                {tab.active && <span className="h-[6px] w-[165px] bg-[#f2f2f2]" />}
              </div>
            ))}
          </div>
          <div className="mt-[7px] flex">
            <Group width="w-[144px]" iconPad="pl-[46px] pt-[4px]" labelPad="pl-[36px]" label="MAKE">
              <MakeIcon />
            </Group>
            <Sep />
            <Group width="w-[176px]" iconPad="pl-[58px] pt-[3px]" labelPad="pl-[27px] tracking-[1.2px]" label="ADD-INS">
              <AddInsIcon />
            </Group>
            <Sep />
            <Group width="w-[191px]" iconPad="pl-[34px] gap-[43px]" labelPad="pl-[37px]" label="UTILITY">
              <TrafficIcon />
              <span className="mt-[3px]">
                <TableIcon />
              </span>
            </Group>
            <Sep />
            <Group width="w-[536px]" iconPad="pl-[27px]" labelPad="pl-[210px]" label="INSPECT">
              <span className="mt-[14px]">
                <RulerIcon />
              </span>
              <span className="ml-[26px]">
                <InterferenceIcon />
              </span>
              <span className="ml-[22px]">
                <ZebraIcon />
              </span>
              <span className="ml-[26px]">
                <DrillIcon />
              </span>
              <span className="ml-[30px] mt-[2px]">
                <SectionIcon />
              </span>
              <span className="ml-[29px] mt-[2px]">
                <ShapesIcon />
              </span>
            </Group>
            <Sep />
            <div className="flex flex-col">
              <div className="-mt-[6px] ml-[39px] h-[76px]">
                <SelectIcon />
              </div>
              <div className="ml-[29px] flex h-[32px] items-center gap-[8px] pt-[6px] text-[24px]">
                <span>SELECT</span>
                <Tri className="mt-[2px]" />
              </div>
            </div>
          </div>
        </div>
      </div>
    </div>
  );
}

export default function App() {
  return (
    <div className="flex h-[1554px] w-[2694px] flex-col overflow-hidden bg-[#3c4454] font-['Roboto',sans-serif]">
      <Toolbar />
      <div className="relative flex-1 overflow-hidden bg-[#343d4a]">
        <Viewport />
        <BrowserPanel />
        <UnsavedBanner />
        <CommentsPanel />
        <NavBar />
      </div>
      <div className="h-[24px] bg-[#3c4454]" />
    </div>
  );
}
